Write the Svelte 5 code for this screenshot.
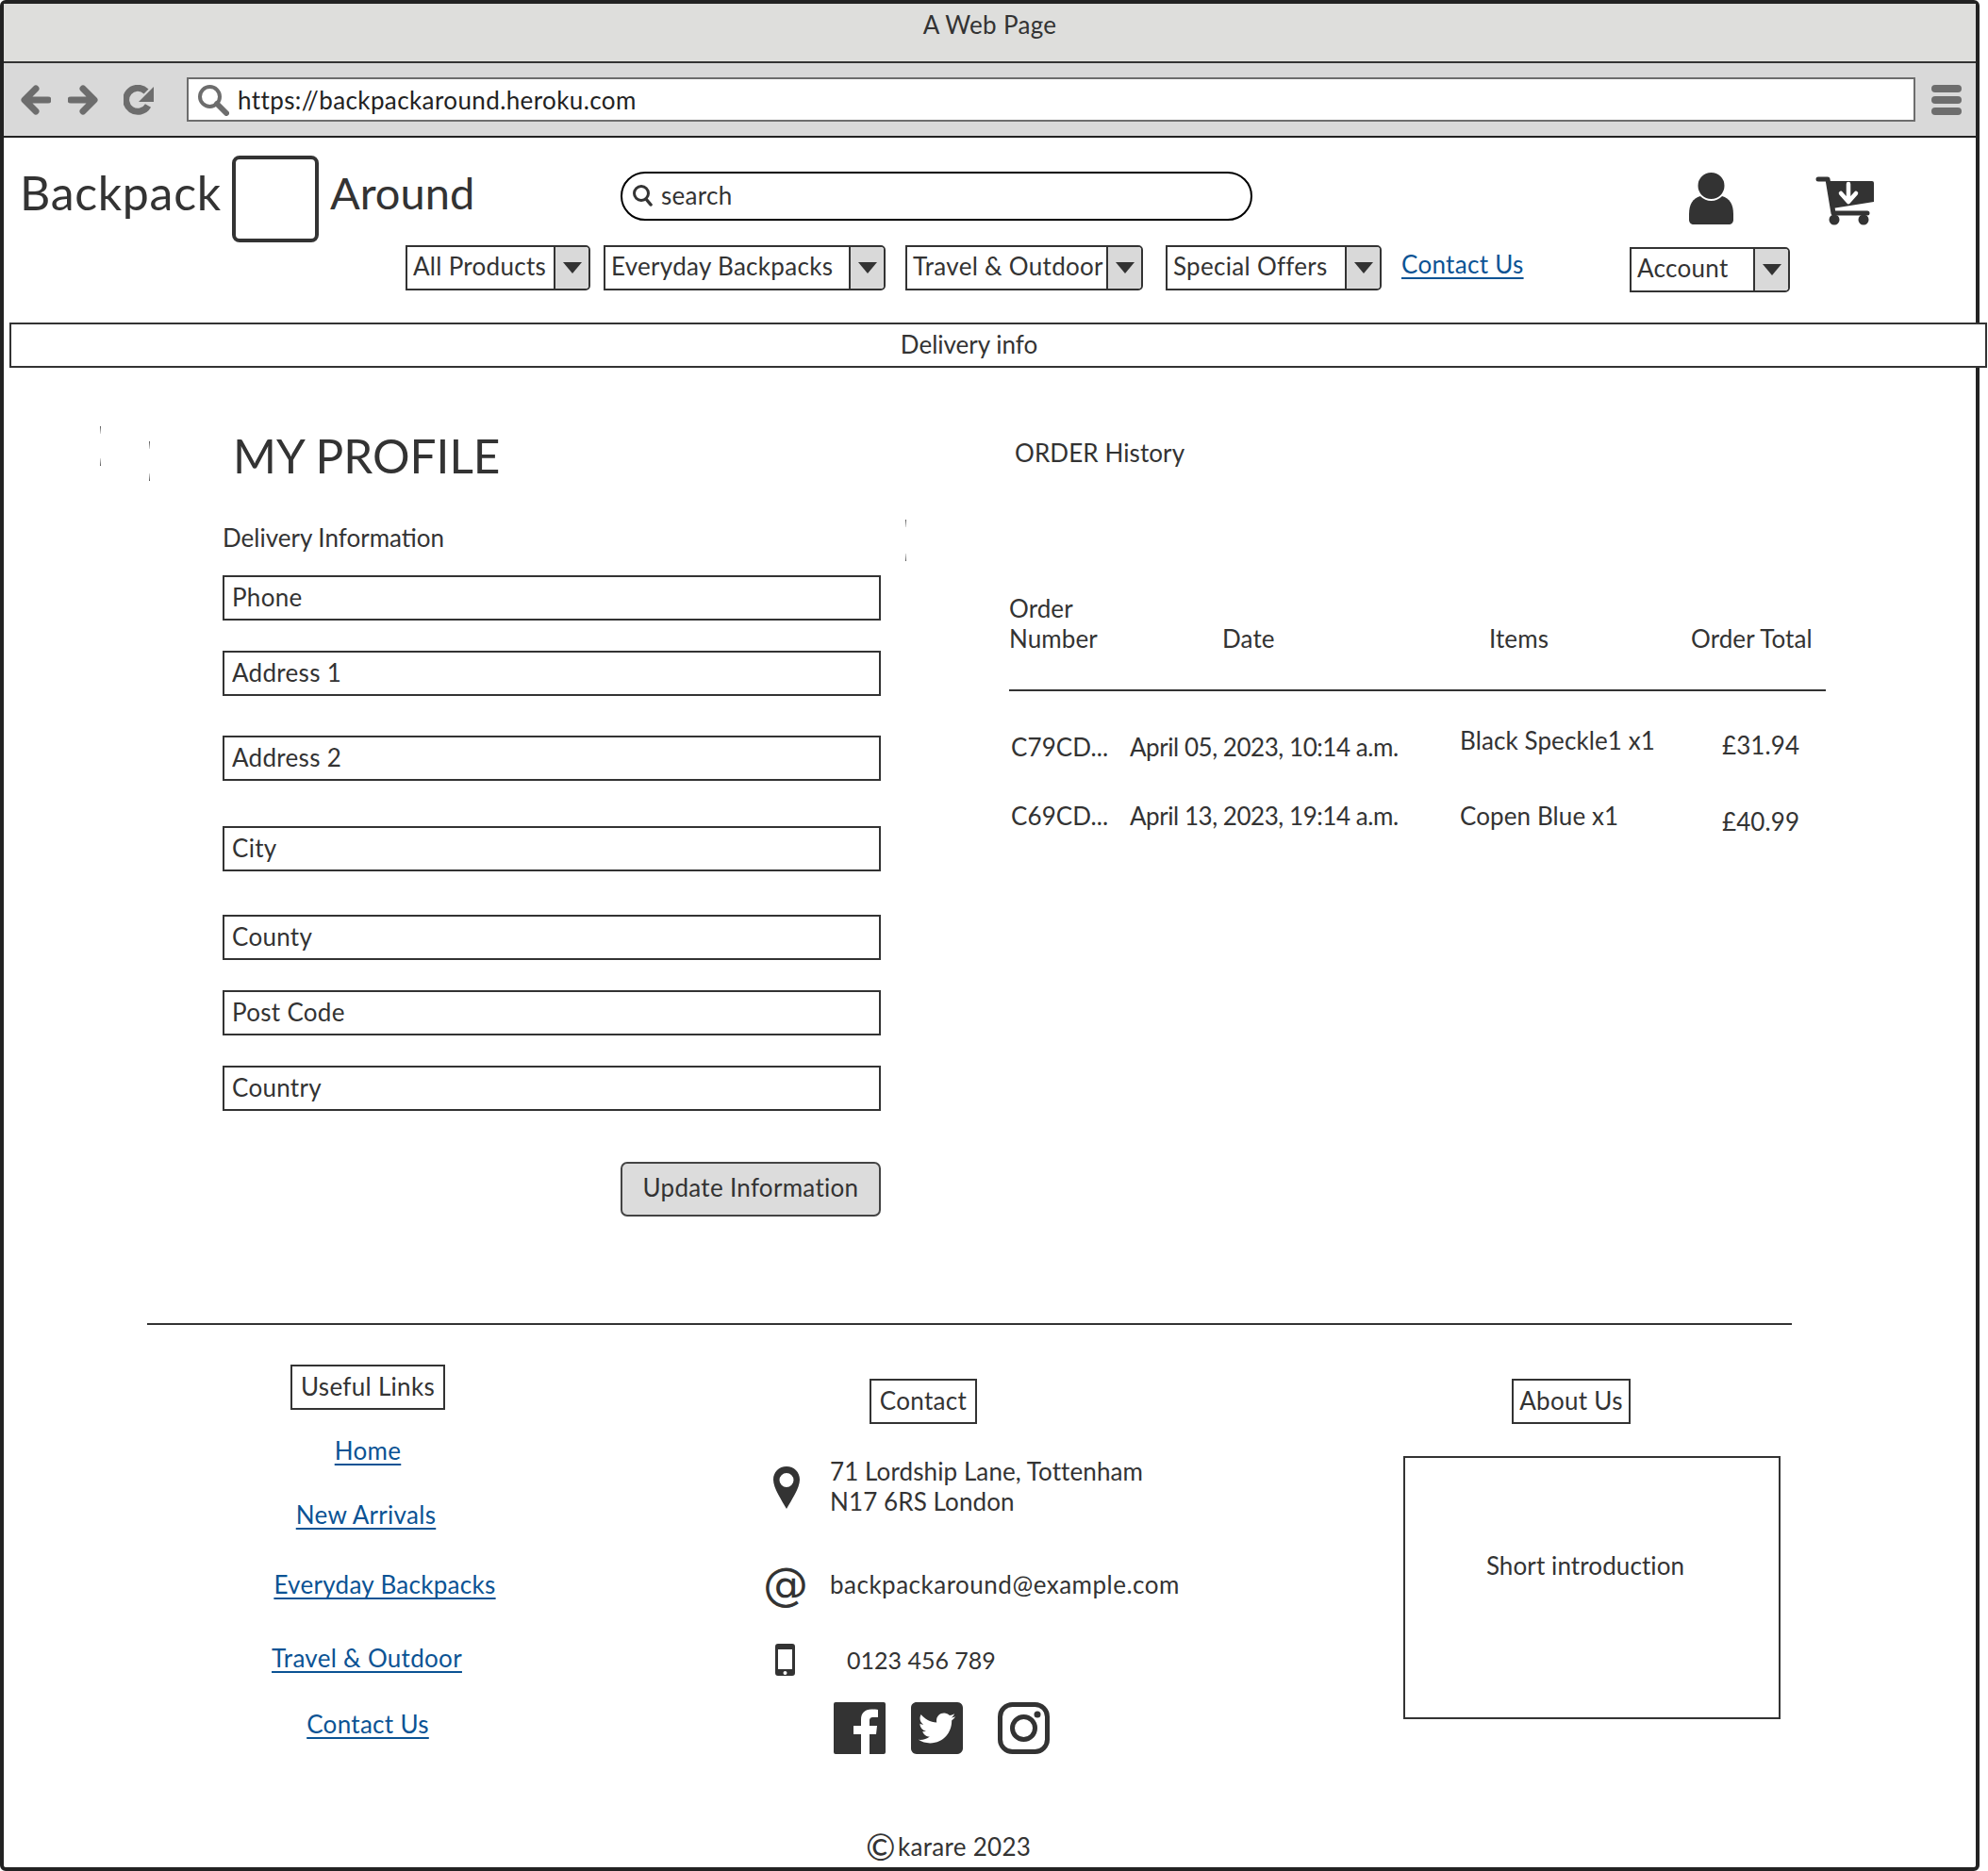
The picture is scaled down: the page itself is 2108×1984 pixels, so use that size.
<script>
  const navItems = [
    { label: 'All Products', width: 196, after: 14 },
    { label: 'Everyday Backpacks', width: 299, after: 21 },
    { label: 'Travel & Outdoor', width: 252, after: 24 },
    { label: 'Special Offers', width: 229, after: 21 }
  ]

  const fields = [
    { label: 'Phone', top: 0 },
    { label: 'Address 1', top: 32 },
    { label: 'Address 2', top: 42 },
    { label: 'City', top: 48 },
    { label: 'County', top: 46 },
    { label: 'Post Code', top: 32 },
    { label: 'Country', top: 32 }
  ]

  const usefulLinks = [
    { label: 'Home', top: 0, shift: 0 },
    { label: 'New Arrivals', top: 38, shift: -2 },
    { label: 'Everyday Backpacks', top: 44, shift: 18 },
    { label: 'Travel & Outdoor', top: 48, shift: -1 },
    { label: 'Contact Us', top: 40, shift: 0 }
  ]

  // leftover corner ticks in the wireframe
  const ticks = [
    { x: 102, y: 448, flip: false },
    { x: 154, y: 464, flip: false },
    { x: 102, y: 482, flip: true },
    { x: 154, y: 498, flip: true },
    { x: 956, y: 547, flip: false },
    { x: 956, y: 583, flip: true }
  ]
</script>

{#snippet caret()}
  <span class="caret"><svg width="20" height="12" viewBox="0 0 20 12"><path d="M0 0h20L10 12z" fill="#333"/></svg></span>
{/snippet}

<div class="frame">
  <div class="titlebar">A Web Page</div>
  <div class="toolbar">
    <svg class="tool-icon" width="32" height="32" viewBox="0 0 32 32"><path d="M16 4 4 16l12 12M5 16h24" fill="none" stroke="#6d6d6d" stroke-width="7" stroke-linecap="round" stroke-linejoin="round"/></svg>
    <svg class="tool-icon forward" width="32" height="32" viewBox="0 0 32 32"><path d="M16 4l12 12-12 12M27 16H3" fill="none" stroke="#6d6d6d" stroke-width="7" stroke-linecap="round" stroke-linejoin="round"/></svg>
    <svg class="tool-icon reload" width="32" height="32" viewBox="0 0 32 32"><path d="M26 22A12.500 12.500 0 1 1 24 7" fill="none" stroke="#6d6d6d" stroke-width="7"/><path d="M32 2v16H16z" fill="#6d6d6d"/></svg>
    <div class="urlbar">
      <svg width="34" height="34" viewBox="0 0 34 34"><circle cx="13.500" cy="13.500" r="10.500" fill="none" stroke="#6d6d6d" stroke-width="4"/><path d="M21 21l10 10" stroke="#6d6d6d" stroke-width="6" stroke-linecap="round"/></svg>
      <span>https://backpackaround.heroku.com</span>
    </div>
    <div class="burger"><i></i><i></i><i></i></div>
  </div>

  <header>
    <div class="top-row">
      <span class="logo-text">Backpack</span>
      <div class="logo-box"></div>
      <span class="logo-text around">Around</span>
      <div class="search">
        <svg width="22" height="24" viewBox="0 0 22 24"><circle cx="10" cy="10" r="7.500" fill="none" stroke="#333" stroke-width="3"/><path d="M15 16l5 6" stroke="#333" stroke-width="3.500" stroke-linecap="round"/></svg>
        <span>search</span>
      </div>
      <svg class="user" width="47" height="56" viewBox="0 0 47 56">
        <path d="M12 26h23c8 2 12 9 12 19v6c0 3-2 5-5 5H5c-3 0-5-2-5-5v-6c0-10 4-17 12-19z" fill="#333"/>
        <circle cx="23.500" cy="15" r="15" fill="#333" stroke="#fff" stroke-width="2"/>
      </svg>
      <svg class="cart" width="63" height="52" viewBox="0 0 63 52">
        <path d="M3 3h10l6 36h36" fill="none" stroke="#333" stroke-width="5" stroke-linecap="round" stroke-linejoin="round"/>
        <path d="M14 5h46a2 2 0 0 1 2 2v20l-44 7z" fill="#333"/>
        <circle cx="20" cy="46" r="5.500" fill="#333"/><circle cx="51" cy="46" r="5.500" fill="#333"/>
        <path d="M35 8v18M27 18l8 9 8-9" fill="none" stroke="#fff" stroke-width="4.500" stroke-linecap="round" stroke-linejoin="round"/>
      </svg>
    </div>
    <nav>
      {#each navItems as item}
        <div class="select" style="width: {item.width}px; margin-right: {item.after}px">
          <span class="select-label">{item.label}</span>
          {@render caret()}
        </div>
      {/each}
      <a class="link nav-link" href="#contact">Contact Us</a>
      <div class="select account">
        <span class="select-label">Account</span>
        {@render caret()}
      </div>
    </nav>
  </header>

  <div class="delivery-bar">Delivery info</div>

  <main>
    <section class="profile">
      <h1>MY PROFILE</h1>
      <p class="section-label">Delivery Information</p>
      <form>
        {#each fields as field}
          <input type="text" placeholder={field.label} style="margin-top: {field.top}px" />
        {/each}
        <button type="button">Update Information</button>
      </form>
    </section>

    <section class="orders">
      <h2>ORDER History</h2>
      <div class="order-head">
        <span>Order<br />Number</span>
        <span>Date</span>
        <span>Items</span>
        <span>Order Total</span>
      </div>
      <div class="order-row">
        <span>C79CD...</span>
        <span class="date">April 05, 2023, 10:14 a.m.</span>
        <span class="item up">Black Speckle1 x1</span>
        <span class="total">£31.94</span>
      </div>
      <div class="order-row second">
        <span>C69CD...</span>
        <span class="date">April 13, 2023, 19:14 a.m.</span>
        <span class="item">Copen Blue x1</span>
        <span class="down">£40.99</span>
      </div>
    </section>
  </main>

  <footer>
    <div class="footer-cols">
      <div class="links-col">
        <div class="tag">Useful Links</div>
        <div class="link-list">
          {#each usefulLinks as l}
            <a class="link" href="#top" style="margin-top: {l.top}px; left: {l.shift}px">{l.label}</a>
          {/each}
        </div>
      </div>

      <div class="contact-col">
        <div class="tag contact-tag">Contact</div>
        <div class="contact-row address">
          <svg class="row-icon" width="28" height="45" viewBox="0 0 28 45"><path fill-rule="evenodd" d="M14 0C6 0 0 6 0 14c0 9 9 22 14 31 5-9 14-22 14-31C28 6 22 0 14 0zm0 7a7.500 7.500 0 1 1 0 15 7.500 7.500 0 0 1 0-15z" fill="#333"/></svg>
          <span class="address-text">71 Lordship Lane, Tottenham<br />N17 6RS London</span>
        </div>
        <div class="contact-row email">
          <span class="at">@</span>
          <span class="email-text">backpackaround@example.com</span>
        </div>
        <div class="contact-row phone">
          <svg class="row-icon" width="21" height="34" viewBox="0 0 21 34"><path fill-rule="evenodd" d="M3 0h15a3 3 0 0 1 3 3v28a3 3 0 0 1-3 3H3a3 3 0 0 1-3-3V3a3 3 0 0 1 3-3zm0 6v21h15V6zm7.500 23a2 2 0 1 0 0 4 2 2 0 0 0 0-4z" fill="#333"/></svg>
          <span class="phone-text">0123 456 789</span>
        </div>
        <div class="socials">
          <svg width="55" height="55" viewBox="0 0 55 55"><path d="M2 0h51a2 2 0 0 1 2 2v51a2 2 0 0 1-2 2H38V34h7l1-9h-8v-5c0-3 1-4 4-4h5V8c-1 0-4-.4-7-.4-7 0-11 4-11 11V25h-8v9h8v21H2a2 2 0 0 1-2-2V2a2 2 0 0 1 2-2z" fill="#333"/></svg>
          <svg class="tw" width="55" height="55" viewBox="0 32 448 448"><path d="M400 32H48C21.500 32 0 53.500 0 80v352c0 26.500 21.500 48 48 48h352c26.500 0 48-21.500 48-48V80c0-26.500-21.500-48-48-48zm-48.900 158.800c.2 2.800.2 5.700.2 8.500 0 86.700-66 186.600-186.600 186.600-37.200 0-71.700-10.800-100.700-29.400 5.300.6 10.400.8 15.800.8 30.700 0 58.900-10.400 81.400-28-28.800-.6-53-19.500-61.300-45.500 10.100 1.500 19.200 1.500 29.600-1.200-30-6.100-52.500-32.500-52.500-64.400v-.8c8.700 4.900 18.900 7.900 29.600 8.300a65.447 65.447 0 0 1-29.200-54.600c0-12.200 3.200-23.400 8.900-33.100 32.300 39.800 80.800 65.800 135.200 68.600-9.300-44.500 24-80.600 64-80.600 18.900 0 35.900 7.900 47.900 20.700 14.800-2.800 29-8.300 41.600-15.800-4.900 15.200-15.100 27.900-28.600 36 13.100-1.400 25.800-5.100 37.600-10.200-8.900 13.100-20.100 24.700-32.900 34z" fill="#333"/></svg>
          <svg class="ig" width="55" height="55" viewBox="0 0 55 55"><rect x="2.500" y="2.500" width="50" height="50" rx="13" fill="none" stroke="#333" stroke-width="5"/><circle cx="27.500" cy="27.500" r="12" fill="none" stroke="#333" stroke-width="5"/><circle cx="42" cy="13" r="3.500" fill="#333"/></svg>
        </div>
      </div>

      <div class="about-col">
        <div class="tag about-tag">About Us</div>
        <div class="intro">Short introduction</div>
      </div>
    </div>
    <div class="copyright"><span class="copy-mark">©</span>karare 2023</div>
  </footer>

  {#each ticks as t}
    <span class="tick" class:flip={t.flip} style="left: {t.x}px; top: {t.y}px"></span>
  {/each}
</div>

<style>
  :global(body) {
    margin: 0;
    background: #fff;
  }

  .frame {
    position: relative;
    box-sizing: border-box;
    width: 2099px;
    height: 1984px;
    border: 4px solid #222;
    border-radius: 6px;
    font-family: Lato, "Liberation Sans", sans-serif;
    font-size: 26px;
    letter-spacing: 0.3px;
    color: #333;
    background: #fff;
  }

  .titlebar {
    height: 61px;
    background: #dededc;
    text-align: center;
    line-height: 44px;
  }

  .toolbar {
    display: flex;
    align-items: center;
    height: 81px;
    box-sizing: border-box;
    border-top: 2px solid #333;
    border-bottom: 2px solid #222;
    padding-left: 18px;
    background: #d9d9d9;
  }

  .forward {
    margin-left: 18px;
  }

  .reload {
    margin-left: 27px;
  }

  .urlbar {
    display: flex;
    align-items: center;
    box-sizing: border-box;
    width: 1833px;
    height: 47px;
    margin-left: 35px;
    padding-left: 9px;
    border: 2px solid #6d6d6d;
    background: #fff;
  }

  .urlbar span {
    margin-left: 9px;
    letter-spacing: 0.4px;
    color: #222;
  }

  .burger {
    display: flex;
    flex-direction: column;
    gap: 4px;
    margin-left: 17px;
  }

  .burger i {
    display: block;
    width: 32px;
    height: 8px;
    border-radius: 4px;
    background: #6d6d6d;
  }

  .top-row {
    display: flex;
    align-items: flex-start;
    height: 114px;
    padding-left: 17px;
  }

  .logo-text {
    font-size: 50px;
    line-height: 58px;
    letter-spacing: 0.7px;
    margin-top: 29px;
    width: 225px;
  }

  .logo-box {
    box-sizing: border-box;
    width: 92px;
    height: 92px;
    margin-top: 19px;
    border: 4px solid #333;
    border-radius: 8px;
  }

  .around {
    width: 300px;
    margin-left: 12px;
    font-size: 47px;
    letter-spacing: 0;
  }

  .search {
    display: flex;
    align-items: center;
    gap: 9px;
    box-sizing: border-box;
    width: 670px;
    height: 52px;
    margin-top: 36px;
    margin-left: 8px;
    padding: 0 0 2px 10px;
    border: 2px solid #000;
    border-radius: 26px;
  }

  .user {
    margin-top: 36px;
    margin-left: 463px;
  }

  .cart {
    margin-top: 41px;
    margin-left: 87px;
  }

  nav {
    display: flex;
    align-items: flex-start;
    padding-left: 426px;
  }

  .select {
    display: flex;
    box-sizing: border-box;
    height: 48px;
    border: 2px solid #333;
    border-radius: 0 5px 5px 0;
    line-height: 40px;
    white-space: nowrap;
  }

  .select-label {
    flex: 1;
    padding-left: 6px;
  }

  .caret {
    display: flex;
    align-items: center;
    justify-content: center;
    width: 35px;
    border-left: 2px solid #333;
    background: #d9d9d9;
    border-radius: 0 3px 3px 0;
  }

  .account {
    width: 170px;
    margin-top: 2px;
    margin-left: 111px;
  }

  .link {
    color: #0b5394;
    text-decoration: underline;
    text-underline-offset: 4px;
  }

  .nav-link {
    display: block;
    width: 131px;
    line-height: 40px;
    white-space: nowrap;
  }

  .delivery-bar {
    box-sizing: border-box;
    width: 2097px;
    height: 48px;
    margin-top: 32px;
    margin-left: 6px;
    border: 2px solid #333;
    background: #fff;
    text-align: center;
    line-height: 42px;
    padding-right: 62px;
    letter-spacing: 0;
  }

  main {
    display: flex;
    padding-left: 232px;
  }

  .profile {
    width: 834px;
  }

  h1 {
    margin: 64px 0 0 11px;
    font-size: 49.500px;
    font-weight: 400;
    line-height: 58px;
    letter-spacing: 0;
  }

  .section-label {
    margin: 43px 0 0;
    line-height: 30px;
    letter-spacing: 0;
  }

  form {
    display: flex;
    flex-direction: column;
    align-items: flex-end;
    width: 698px;
    margin-top: 25px;
  }

  input {
    box-sizing: border-box;
    width: 698px;
    height: 48px;
    padding: 0 0 2px 8px;
    border: 2px solid #333;
    border-radius: 0;
    outline: none;
    font: inherit;
    letter-spacing: inherit;
  }

  input::placeholder {
    color: #333;
    opacity: 1;
  }

  button {
    width: 276px;
    height: 58px;
    margin-top: 54px;
    border: 2px solid #444;
    border-radius: 7px;
    background: #dcdcdc;
    color: #333;
    font: inherit;
    letter-spacing: inherit;
    padding: 0 0 4px;
  }

  .orders {
    width: 870px;
    letter-spacing: 0.1px;
  }

  h2 {
    margin: 75px 0 0 6px;
    font-size: 26px;
    font-weight: 400;
    line-height: 30px;
  }

  .order-head {
    display: grid;
    grid-template-columns: 226px 283px 214px 1fr;
    align-items: end;
    width: 866px;
    height: 104px;
    box-sizing: border-box;
    margin-top: 134px;
    padding-bottom: 38px;
    border-bottom: 2px solid #333;
    line-height: 32px;
  }

  .order-row {
    display: grid;
    grid-template-columns: 126px 350px 278px 1fr;
    margin-top: 44px;
    padding-left: 2px;
    line-height: 30px;
  }

  .order-row.second {
    margin-top: 43px;
  }

  .date {
    letter-spacing: -0.45px;
  }

  .item {
    position: relative;
  }

  .up {
    top: -7px;
  }

  .total {
    position: relative;
    top: -2px;
  }

  .down {
    position: relative;
    top: 6px;
  }

  .footer-cols {
    display: flex;
    align-items: flex-start;
    width: 1744px;
    margin: 0 0 0 152px;
    box-sizing: border-box;
    border-top: 2px solid #333;
    position: absolute;
    top: 1399px;
    height: 520px;
  }

  .tag {
    box-sizing: border-box;
    height: 48px;
    border: 2px solid #333;
    line-height: 42px;
    text-align: center;
    white-space: nowrap;
  }

  .links-col {
    width: 656px;
  }

  .links-col .tag {
    width: 164px;
    margin: 42px 0 0 152px;
  }

  .link-list {
    display: flex;
    flex-direction: column;
    align-items: center;
    width: 468px;
    margin-top: 28px;
    line-height: 30px;
  }

  .link-list a {
    position: relative;
  }

  .contact-col {
    width: 676px;
    padding-top: 57px;
  }

  .contact-tag {
    width: 114px;
    margin-left: 110px;
  }

  .contact-row {
    display: flex;
    align-items: center;
    line-height: 32px;
    position: relative;
  }

  .address {
    margin-top: 34px;
  }

  .address .row-icon {
    margin-left: 8px;
    margin-right: 32px;
    position: relative;
    top: 1px;
  }

  .address-text {
    letter-spacing: 0.1px;
  }

  .email {
    margin-top: 47px;
  }

  .email-text {
    letter-spacing: 0.5px;
  }

  .at {
    width: 71px;
    margin-left: -3px;
    font-family: "DejaVu Sans", sans-serif;
    font-size: 48px;
    line-height: 50px;
    letter-spacing: 0;
  }

  .phone {
    margin-top: 38px;
  }

  .phone .row-icon {
    margin-left: 10px;
    margin-right: 55px;
  }

  .phone-text {
    letter-spacing: 0;
    font-size: 25px;
  }

  .socials {
    display: flex;
    margin: 28px 0 0 72px;
  }

  .tw {
    margin-left: 27px;
  }

  .ig {
    margin-left: 37px;
  }

  .about-col {
    width: 399px;
  }

  .about-tag {
    width: 126px;
    margin: 57px 0 0 115px;
  }

  .intro {
    box-sizing: border-box;
    width: 400px;
    height: 279px;
    margin-top: 34px;
    padding: 98px 14px 0 0;
    border: 2px solid #333;
    text-align: center;
    line-height: 32px;
    letter-spacing: 0.1px;
  }

  .copyright {
    position: absolute;
    top: 1936px;
    left: 914px;
    display: flex;
    align-items: center;
    line-height: 36px;
  }

  .copy-mark {
    font-size: 38px;
    line-height: 36px;
    margin-right: 2px;
  }

  .tick {
    position: absolute;
    width: 1px;
    height: 8px;
    background: linear-gradient(#555, #ddd);
  }

  .tick.flip {
    background: linear-gradient(#ddd, #555);
  }
</style>
